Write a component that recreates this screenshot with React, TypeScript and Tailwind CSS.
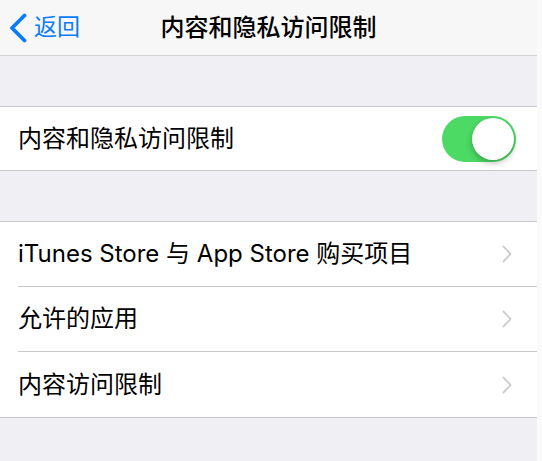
import React, { useState } from 'react';

const font = { fontFamily: 'Inter, "Noto Sans CJK SC", sans-serif' };

const Chevron = () => (
  <svg width="10" height="18" viewBox="0 0 10 18" fill="none">
    <path d="M1.5 1.5 L8.5 9 L1.5 16.5" stroke="#c7c7cc" strokeWidth="1.8" strokeLinecap="round" strokeLinejoin="round" />
  </svg>
);

const Toggle = ({ on, onChange }: { on: boolean; onChange: (v: boolean) => void }) => (
  <button
    type="button"
    onClick={() => onChange(!on)}
    className={`relative w-[74px] h-[46px] rounded-full ${on ? 'bg-[#4cd964]' : 'bg-[#e5e5ea]'}`}
  >
    <span
      className={`absolute top-[2px] w-[42px] h-[42px] rounded-full bg-white shadow-[0_3px_6px_rgba(0,0,0,0.25)] ${
        on ? 'left-[30px]' : 'left-[2px]'
      }`}
    />
  </button>
);

const LinkRow = ({ label, last }: { label: string; last?: boolean }) => (
  <div className="flex h-[65px] items-stretch pl-[18px]">
    <div className={`flex flex-1 items-center justify-between pr-[25px] ${last ? '' : 'border-b border-[#c8c7cc]'}`}>
      <span className="text-[24px] text-black">{label}</span>
      <Chevron />
    </div>
  </div>
);

export default function App() {
  const [enabled, setEnabled] = useState(true);

  return (
    <div className="flex w-[542px] h-[461px] overflow-hidden bg-[#fafafa]" style={font}>
      <div className="w-[537px] flex flex-col bg-[#efeff4]">
        {/* Nav bar */}
        <div className="relative flex h-[56px] items-center justify-center border-b border-[#d4d4d8] bg-[#f7f7f7]">
          <div className="absolute left-[8px] top-0 flex h-full items-center gap-[6px] text-[#0a7aff]">
            <svg width="20" height="30" viewBox="0 0 20 30" fill="none">
              <path d="M16.5 2.5 L4 15 L16.5 27.5" stroke="#0a7aff" strokeWidth="3.8" strokeLinecap="round" strokeLinejoin="round" />
            </svg>
            <span className="text-[23px]">返回</span>
          </div>
          <span className="text-[24px] font-medium text-black">内容和隐私访问限制</span>
        </div>

        <div className="h-[50px]" />

        {/* Toggle row */}
        <div className="flex h-[65px] items-center justify-between border-y border-[#c8c7cc] bg-white pl-[18px] pr-[21px]">
          <span className="text-[24px] text-black">内容和隐私访问限制</span>
          <Toggle on={enabled} onChange={setEnabled} />
        </div>

        <div className="h-[50px]" />

        {/* Links group */}
        <div className="border-y border-[#c8c7cc] bg-white">
          <LinkRow label="iTunes Store 与 App Store 购买项目" />
          <LinkRow label="允许的应用" />
          <LinkRow label="内容访问限制" last />
        </div>
      </div>
    </div>
  );
}
